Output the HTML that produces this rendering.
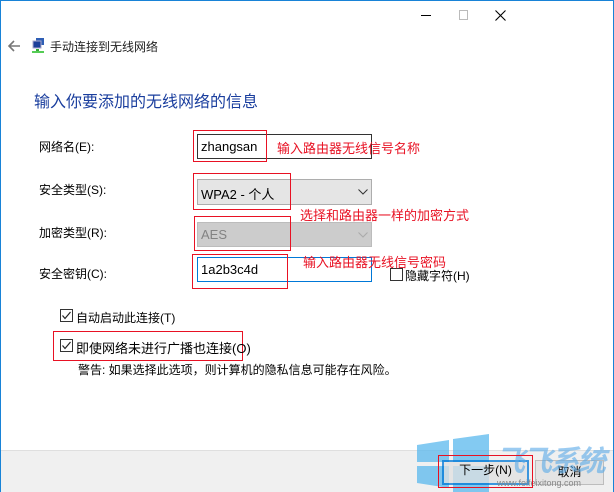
<!DOCTYPE html>
<html><head><meta charset="utf-8"><style>
*{margin:0;padding:0;box-sizing:border-box}
body{width:614px;height:492px;position:relative;overflow:hidden;background:#fff;font-family:"Liberation Sans","Microsoft YaHei","Noto Sans CJK SC",sans-serif;font-size:12px;color:#000}
.a{position:absolute;white-space:nowrap}
.red{position:absolute;border:1px solid #e81123}
.rt{position:absolute;color:#e81123;font-size:13px;white-space:nowrap}
.cb{position:absolute;width:13px;height:13px;border:1px solid #333;background:#fff}
</style></head><body>
<div class="a" style="left:0;top:0;width:614px;height:1px;background:#1883d7"></div>
<div class="a" style="left:0;top:0;width:1px;height:492px;background:#1883d7"></div>
<div class="a" style="left:613px;top:0;width:1px;height:492px;background:#1883d7"></div>
<div class="a" style="left:421px;top:15px;width:10px;height:1px;background:#000"></div>
<div class="a" style="left:459px;top:10px;width:9px;height:10px;border:1px solid #bbb"></div>
<svg class="a" style="left:495px;top:10px" width="11" height="11"><path d="M0.5 0.5L10.5 10.5M10.5 0.5L0.5 10.5" stroke="#000" stroke-width="1.1"/></svg>
<svg class="a" style="left:7px;top:40px" width="14" height="12"><path d="M13 6H2M7 1L2 6L7 11" stroke="#777" stroke-width="1.6" fill="none"/></svg>
<svg class="a" style="left:31px;top:37px" width="15" height="17"><rect x="5" y="1" width="8" height="7" fill="#2f5fb5"/><rect x="2" y="4" width="8" height="7" fill="#1c3f9a" stroke="#aac" stroke-width="1"/><rect x="5" y="12" width="3" height="2" fill="#3a3"/><rect x="1" y="14" width="12" height="2" fill="#5c5"/></svg>
<div class="a" style="left:50px;top:38px;font-size:12px;color:#222">手动连接到无线网络</div>
<div class="a" style="left:34px;top:88px;font-size:16px;color:#1a3e9e">输入你要添加的无线网络的信息</div>
<div class="a" style="left:39px;top:138px">网络名(E):</div>
<div class="a" style="left:39px;top:181px">安全类型(S):</div>
<div class="a" style="left:39px;top:224px">加密类型(R):</div>
<div class="a" style="left:39px;top:265px">安全密钥(C):</div>
<div class="a" style="left:197px;top:134px;width:175px;height:25px;border:1px solid #333;padding:4px 3px;font-size:13px">zhangsan</div>
<div class="a" style="left:197px;top:179px;width:175px;height:26px;border:1px solid #adadad;background:#e5e5e5;padding:4px 3px;font-size:13px">WPA2 - 个人</div>
<svg class="a" style="left:358px;top:189px" width="10" height="6"><path d="M0.5 0.5L5 5L9.5 0.5" stroke="#333" fill="none"/></svg>
<div class="a" style="left:197px;top:222px;width:175px;height:25px;border:1px solid #bcbcbc;background:#cccccc;padding:4px 3px;font-size:13px;color:#838383">AES</div>
<svg class="a" style="left:358px;top:232px" width="10" height="6"><path d="M0.5 0.5L5 5L9.5 0.5" stroke="#aaa" fill="none"/></svg>
<div class="a" style="left:197px;top:257px;width:175px;height:25px;border:1px solid #0078d7;padding:4px 3px;font-size:13px">1a2b3c4d</div>
<div class="cb" style="left:390px;top:268px"></div>
<div class="a" style="left:405px;top:267px">隐藏字符(H)</div>
<div class="red" style="left:193px;top:130px;width:74px;height:32px"></div>
<div class="rt" style="left:277px;top:138px">输入路由器无线信号名称</div>
<div class="red" style="left:193px;top:173px;width:98px;height:37px"></div>
<div class="rt" style="left:300px;top:205px">选择和路由器一样的加密方式</div>
<div class="red" style="left:194px;top:216px;width:97px;height:35px"></div>
<div class="rt" style="left:303px;top:252px">输入路由器无线信号密码</div>
<div class="red" style="left:192px;top:254px;width:96px;height:35px"></div>
<div class="cb" style="left:60px;top:309px"></div>
<svg class="a" style="left:61px;top:310px" width="11" height="11"><path d="M1.5 5.5L4 8.5L9.5 2" stroke="#222" fill="none" stroke-width="1.2"/></svg>
<div class="a" style="left:76px;top:309px">自动启动此连接(T)</div>
<div class="red" style="left:53px;top:331px;width:190px;height:30px"></div>
<div class="cb" style="left:60px;top:339px"></div>
<svg class="a" style="left:61px;top:340px" width="11" height="11"><path d="M1.5 5.5L4 8.5L9.5 2" stroke="#222" fill="none" stroke-width="1.2"/></svg>
<div class="a" style="left:76px;top:338px;font-size:13px">即使网络未进行广播也连接(O)</div>
<div class="a" style="left:78px;top:361px">警告: 如果选择此选项，则计算机的隐私信息可能存在风险。</div>
<div class="a" style="left:1px;top:450px;width:612px;height:42px;background:#f0f0f0;border-top:1px solid #dfdfdf"></div>
<svg class="a" style="left:417px;top:433px" width="80" height="59">
<path d="M0 12L32 7V29H0Z M36 6L72 1V29H36Z M0 33H32V55L0 50Z M36 33H72V59L36 59Z" fill="#5ab8ee" opacity="0.75"/>
</svg>
<div class="a" style="left:442px;top:460px;width:87px;height:25px;border:2px solid #0078d7;background:#e1e1e1;opacity:.75"></div>
<div class="a" style="left:442px;top:460px;width:87px;height:25px;text-align:center;line-height:21px">下一步(N)</div>
<div class="a" style="left:535px;top:460px;width:69px;height:25px;border:1px solid #adadad;background:#e1e1e1;opacity:.75"></div>
<div class="a" style="left:535px;top:460px;width:69px;height:25px;text-align:center;line-height:24px">取消</div>
<div class="a" style="left:496px;top:438px;font-size:29px;font-weight:bold;font-style:italic;color:#5aaae8;opacity:.6;letter-spacing:-2px">飞飞系统</div>
<div class="a" style="left:497px;top:478px;font-size:9px;color:#888">www.feifeixitong.com</div>
<div class="red" style="left:438px;top:455px;width:95px;height:33px"></div>
</body></html>
